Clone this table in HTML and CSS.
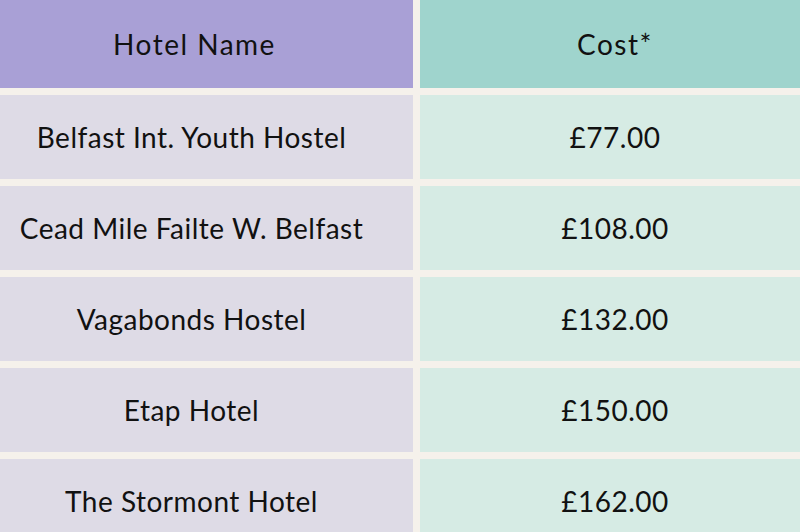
FILE: index.html
```html
<!DOCTYPE html>
<html>
<head>
<meta charset="utf-8">
<link rel="stylesheet" href="styles.css">
</head>
<body>
<div class="table">
  <div class="cell head name">Hotel Name</div>
  <div class="cell head cost">Cost*</div>
  <div class="cell name">Belfast Int. Youth Hostel</div>
  <div class="cell cost">£77.00</div>
  <div class="cell name">Cead Mile Failte W. Belfast</div>
  <div class="cell cost">£108.00</div>
  <div class="cell name">Vagabonds Hostel</div>
  <div class="cell cost">£132.00</div>
  <div class="cell name">Etap Hotel</div>
  <div class="cell cost">£150.00</div>
  <div class="cell name">The Stormont Hotel</div>
  <div class="cell cost">£162.00</div>
</div>
</body>
</html>
```
FILE: styles.css
```css
html, body {
  margin: 0;
  padding: 0;
  background: #f5f1eb;
  overflow: hidden;
}
.table {
  display: grid;
  grid-template-columns: 413px 380px;
  grid-template-rows: 88px repeat(5, 84px);
  column-gap: 7px;
  row-gap: 7px;
  width: 800px;
  height: 532px;
  font-family: "Lato", "Noto Sans", sans-serif;
  color: #111;
}
.cell {
  display: flex;
  align-items: center;
  justify-content: center;
  font-size: 28px;
  letter-spacing: 0.5px;
}
.cell.head {
  letter-spacing: 1.5px;
}
.cell.name {
  background: #dedbe6;
  padding-right: 30px;
}
.cell.cost {
  background: #d6ebe4;
  padding-left: 10px;
}
.cell.head.name { background: #a9a0d6; padding-right: 24px; }
.cell.head.cost { background: #9fd4cd; }
```
